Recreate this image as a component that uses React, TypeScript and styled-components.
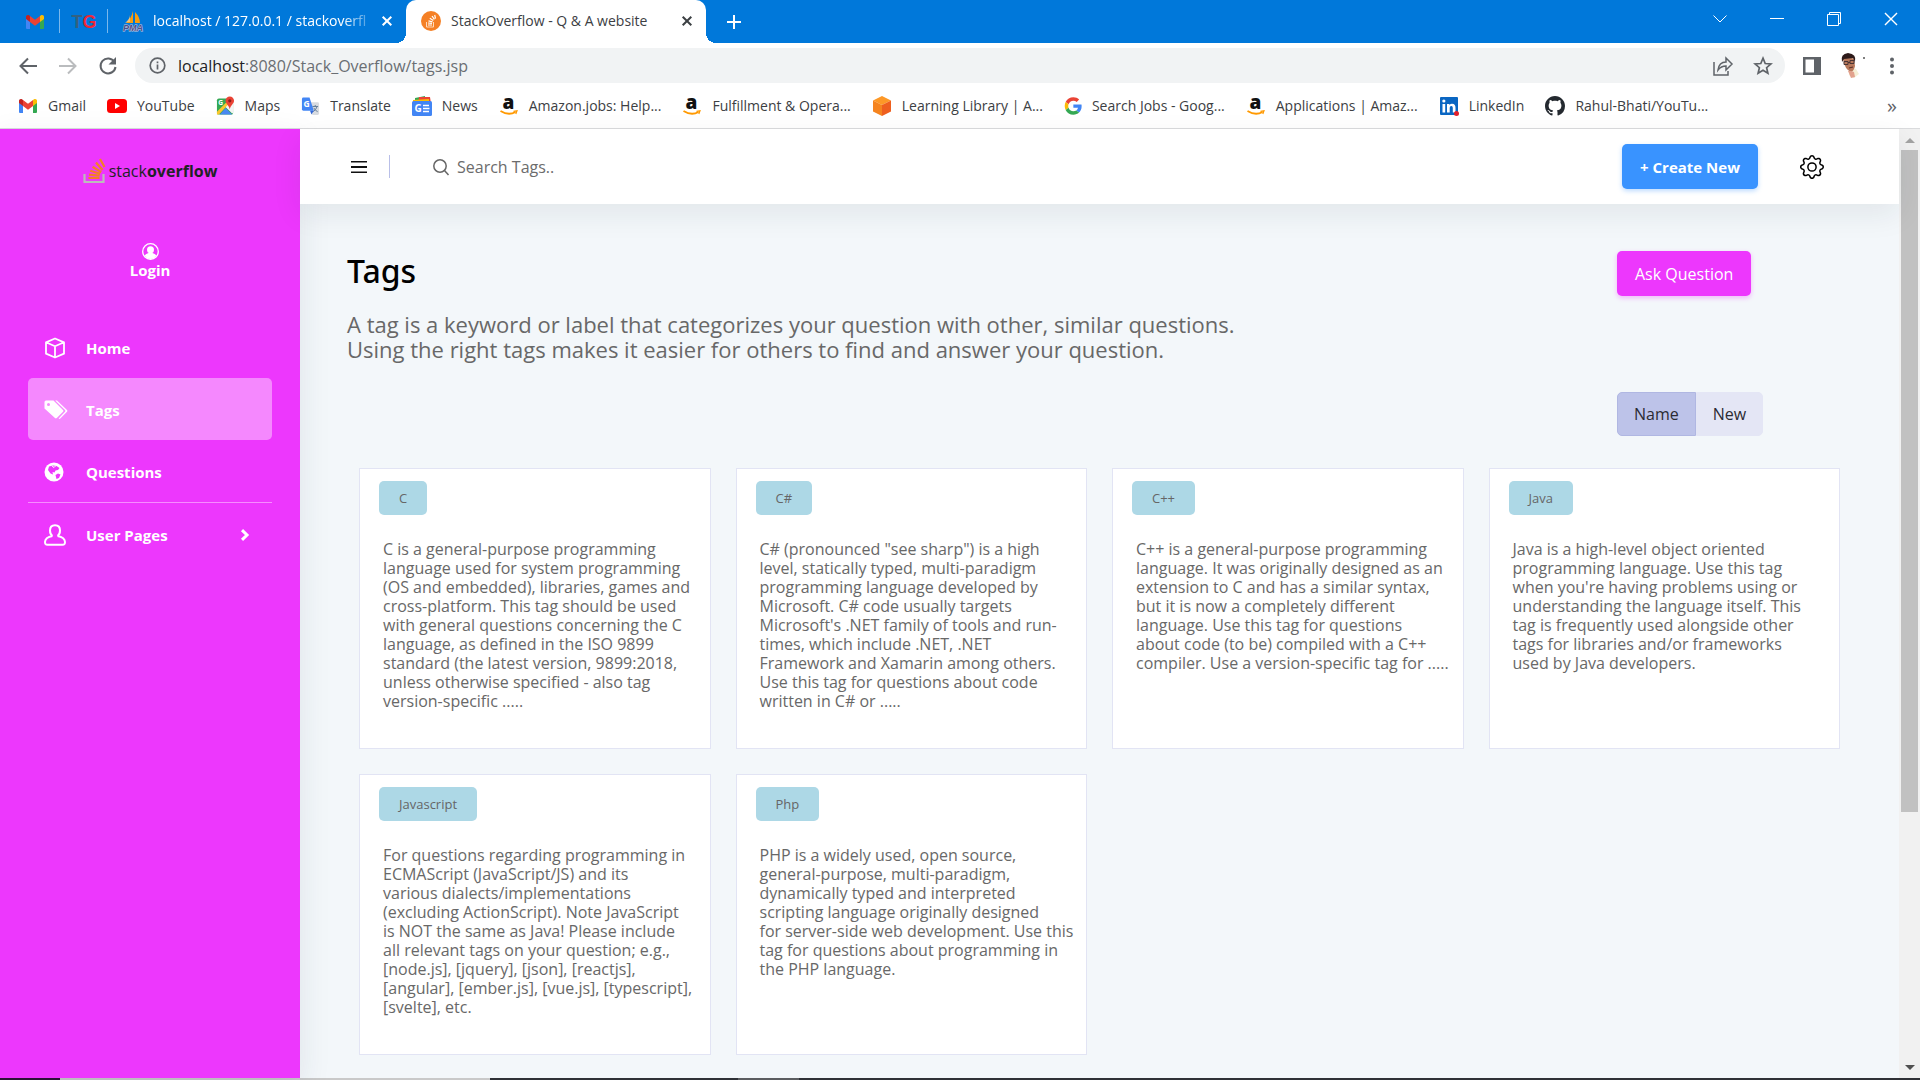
import React from "react";
import styled, { createGlobalStyle, css } from "styled-components";

const uiFont = '"Open Sans", "Noto Sans", sans-serif';
const pink = "#ed37fd";

const GlobalStyle = createGlobalStyle`
  *, *::before, *::after { box-sizing: border-box; }
  body { margin: 0; overflow: hidden; background: #fff; font-family: ${uiFont}; }
  button, input { font-family: inherit; }
  svg { display: block; flex: none; overflow: visible; }
`;

/* ---------- Browser window ---------- */

const Window = styled.div`
  display: flex;
  flex-direction: column;
  height: 100vh;
`;

const TabStrip = styled.header`
  display: flex;
  align-items: stretch;
  height: 43px;
  flex: none;
  background: #0078da;
`;

const plainButton = css`
  display: flex;
  align-items: center;
  justify-content: center;
  padding: 0;
  border: 0;
  background: none;
  cursor: pointer;
`;

const PinnedTab = styled.button<{ $wide?: boolean }>`
  ${plainButton}
  width: ${(p) => (p.$wide ? 60 : 48)}px;
  padding-left: ${(p) => (p.$wide ? 10 : 0)}px;
  background: linear-gradient(#7ab8ec, #7ab8ec) right 9px / 1px 24px no-repeat;
`;

const TgMark = styled.span`
  font: 700 18px/24px "Liberation Sans", Arial, sans-serif;
  color: #35617f;
  b { color: #ee2737; }
`;

const Tab = styled.div<{ $active?: boolean }>`
  position: relative;
  display: flex;
  align-items: center;
  width: 298px;
  padding: 0 9px 2px 15px;
  font-size: 14px;
  color: ${(p) => (p.$active ? "#3c4043" : "#fff")};
  ${(p) =>
    p.$active &&
    css`
      width: 300px;
      background: #fff;
      border-radius: 10px 10px 0 0;
      &::before,
      &::after {
        content: "";
        position: absolute;
        bottom: 0;
        width: 10px;
        height: 10px;
      }
      &::before { right: 100%; background: radial-gradient(circle at 0 0, transparent 10px, #fff 10px); }
      &::after { left: 100%; background: radial-gradient(circle at 100% 0, transparent 10px, #fff 10px); }
    `}
`;

const TabTitle = styled.span<{ $fade?: boolean }>`
  flex: 1;
  min-width: 0;
  margin: 0 4px 0 10px;
  white-space: nowrap;
  ${(p) => p.$fade && "mask-image: linear-gradient(90deg, #000 86%, transparent 102%);"}
`;

const IconButton = styled.button<{ $w?: number }>`
  ${plainButton}
  flex: none;
  width: ${(p) => p.$w ?? 20}px;
  color: inherit;
`;

const NewTab = styled(IconButton)`
  margin-left: 10px;
  color: #fff;
`;

const WindowControls = styled.div`
  display: flex;
  margin-left: auto;
  padding-bottom: 6px;
  color: #fff;
`;

const Toolbar = styled.div`
  display: flex;
  align-items: center;
  height: 45px;
  flex: none;
  padding: 0 13px 0 8px;
  color: #5f6368;
`;

const Address = styled.div`
  display: flex;
  align-items: center;
  flex: 1;
  height: 35px;
  margin: 0 8px 0 7px;
  padding: 0 8px 0 14px;
  gap: 12px;
  border-radius: 18px;
  background: #f1f3f4;
`;

const Url = styled.a`
  flex: 1;
  font-size: 16px;
  line-height: 24px;
  color: #6a6e73;
  text-decoration: none;
  strong { font-weight: 400; color: #202124; }
`;

const Bookmarks = styled.nav`
  display: flex;
  align-items: center;
  gap: 21px;
  height: 41px;
  flex: none;
  padding: 0 18px 4px 18px;
  border-bottom: 1px solid #dadbdd;
`;

const Bookmark = styled.a`
  display: flex;
  align-items: center;
  gap: 10px;
  font-size: 14px;
  line-height: 20px;
  white-space: nowrap;
  color: #3c4043;
  text-decoration: none;
`;

const More = styled(IconButton)`
  margin-left: auto;
  font-size: 20px;
  line-height: 20px;
  color: #5f6368;
`;

const Viewport = styled.div`
  display: flex;
  flex: 1;
  min-height: 0;
`;

const Scrollbar = styled.div`
  display: flex;
  flex-direction: column;
  align-items: center;
  width: 21px;
  flex: none;
  padding: 9px 1px 8px;
  background: #f1f1f1;
`;

const Thumb = styled.div`
  flex: 0 0 71%;
  width: 17px;
  margin: 7px 0 auto;
  background: #c1c1c1;
`;

const Taskbar = styled.footer`
  display: grid;
  grid-template-columns: 60px 430px 248px 61px 1fr;
  height: 2px;
  flex: none;
  background: #2f3136;
`;

const TaskbarPart = styled.span<{ $color: string }>`
  background: ${(p) => p.$color};
`;

/* ---------- Site ---------- */

const Sidebar = styled.aside`
  display: flex;
  flex-direction: column;
  width: 300px;
  flex: none;
  padding: 28px 28px 0;
  z-index: 1;
  background: ${pink};
  color: #fff;
  box-shadow: 0 10px 30px rgba(30, 45, 70, 0.1);
`;

const Brand = styled.a`
  display: flex;
  align-items: center;
  align-self: center;
  gap: 3px;
  height: 28px;
  font-size: 16px;
  line-height: 20px;
  color: #222226;
  text-decoration: none;
`;

const BrandName = styled.span`
  font-weight: 400;
  b { font-weight: 700; }
`;

const Login = styled.a`
  display: flex;
  flex-direction: column;
  align-items: center;
  margin: 58px 0 36px;
  font-size: 15px;
  font-weight: 700;
  line-height: 20px;
  color: #fff;
  text-decoration: none;
`;

const Menu = styled.ul`
  margin: 0;
  padding: 0;
  list-style: none;
`;

const MenuItem = styled.li<{ $divided?: boolean }>`
  ${(p) => p.$divided && "border-bottom: 1px solid #f78bff;"}
`;

const MenuLink = styled.a<{ $active?: boolean }>`
  display: grid;
  grid-template-columns: 42px 1fr 14px;
  align-items: center;
  height: 62px;
  padding: 2px 18px 0 16px;
  border-radius: 5px;
  background: ${(p) => (p.$active ? "#f588fe" : "transparent")};
  font-size: 15px;
  font-weight: 700;
  line-height: 22px;
  color: #fff;
  text-decoration: none;
`;

const Site = styled.div`
  display: flex;
  flex-direction: column;
  flex: 1;
  min-width: 0;
  background: #f3f7fa;
`;

const Navbar = styled.div`
  display: flex;
  align-items: center;
  height: 75px;
  flex: none;
  padding: 0 75px 0 49px;
  z-index: 2;
  background: #fff;
  box-shadow: 0 10px 30px rgba(30, 35, 50, 0.08);
`;

const NavDivider = styled.span`
  width: 1px;
  height: 23px;
  margin: 0 42px 0 20px;
  background: #b9bfe8;
`;

const Search = styled.label`
  display: flex;
  align-items: center;
  flex: 1;
  gap: 7px;
  color: #666;
`;

const SearchInput = styled.input`
  flex: 1;
  padding: 0;
  border: 0;
  outline: 0;
  background: none;
  font-size: 16px;
  line-height: 24px;
  color: #666;
  &::placeholder { color: #6c6c6c; opacity: 1; }
`;

const Button = styled.button<{ $color: string; $bold?: boolean }>`
  height: 45px;
  padding: 0 18px;
  border: 0;
  border-radius: 5px;
  background: ${(p) => p.$color};
  box-shadow: 0 2px 5px ${(p) => p.$color}55;
  font-size: ${(p) => (p.$bold ? 15 : 16)}px;
  font-weight: ${(p) => (p.$bold ? 700 : 500)};
  line-height: 22px;
  color: #fff;
  cursor: pointer;
`;

const SettingsButton = styled(IconButton)`
  margin-left: 42px;
  color: #000;
`;

const Main = styled.main`
  flex: 1;
  min-height: 0;
  overflow: hidden;
  padding: 47px 47px 0;
`;

const HeadRow = styled.div`
  display: grid;
  grid-template-columns: 1fr 235px;
  justify-items: start;
  align-items: start;
`;

const Title = styled.h1`
  margin: 0;
  font: 500 32px/40px "Noto Sans", sans-serif;
  color: #000;
`;

const Lead = styled.p`
  max-width: 940px;
  margin: 16px 0 30px;
  font-size: 22px;
  line-height: 25px;
  color: #686868;
`;

const Sort = styled.div`
  display: flex;
  grid-column: 2;
  height: 44px;
`;

const SortButton = styled.button<{ $active?: boolean }>`
  padding: 0 16px;
  border: 1px solid ${(p) => (p.$active ? "#b0b7e2" : "#e4e6f5")};
  border-radius: ${(p) => (p.$active ? "5px 0 0 5px" : "0 5px 5px 0")};
  background: ${(p) => (p.$active ? "#bdc3e9" : "#e4e6f5")};
  font-size: 16px;
  line-height: 22px;
  color: #2b2b33;
  cursor: pointer;
`;

const CardGrid = styled.section`
  display: grid;
  grid-template-columns: repeat(4, 1fr);
  gap: 25px;
  margin-top: 32px;
  padding: 0 12px;
`;

const Card = styled.article`
  min-height: 281px;
  padding: 12px 8px 24px 19px;
  border: 1px solid #e2e4f4;
  background: #fff;
`;

const Chip = styled.a`
  display: inline-block;
  padding: 0 20px;
  border-radius: 5px;
  background: #add8e6;
  font-size: 13px;
  line-height: 34px;
  vertical-align: top;
  color: #666;
  text-decoration: none;
`;

const Description = styled.p`
  margin: 25px 0 0 4px;
  font-size: 16px;
  line-height: 19px;
  white-space: pre-line;
  color: #686868;
`;

/* ---------- Icons ---------- */

const GmailIcon = () => (
  <svg width="20" height="20" viewBox="0 0 20 20">
    <path d="M1 4.5V16a1 1 0 0 0 1 1h3V8z" fill="#4285f4" />
    <path d="M19 4.5V16a1 1 0 0 1-1 1h-3V8z" fill="#34a853" />
    <path d="M15 8V4l1-.7c1.300-.9 3-.1 3 1.500V7l-4 3z" fill="#fbbc04" />
    <path d="M5 8V4l-1-.7C2.700 2.400 1 3.200 1 4.800V7l4 3z" fill="#c5221f" />
    <path d="M5 4l5 3.800L15 4v6l-5 3.800L5 10z" fill="#ea4335" />
  </svg>
);

const PmaIcon = () => (
  <svg width="20" height="20" viewBox="0 0 20 20">
    <path d="M10 0v12H3Q8 8 10 0zM12 1q5 5 5 11h-5z" fill="#f89c0e" />
    <path d="M7 4q0 4-5 8 2-1 5-1z" fill="#f4c172" />
    <text x="10" y="20" textAnchor="middle" fontSize="9" fontWeight="700" fontStyle="italic" fontFamily="Liberation Sans" fill="#4d4f89" stroke="#c8cbdf" strokeWidth="1" paintOrder="stroke">PMA</text>
  </svg>
);

const StackLines = ({ color }: { color: string }) => (
  <g stroke={color} strokeWidth="2.200" fill="none">
    <path d="M5.500 20h11M6 16.600l10.600 1.100M7.200 12.800l10 3M9.600 8.800l8.600 5.300M13 4.500l6.500 7.500M17 1l4.500 8" />
  </g>
);

const StackFavicon = () => (
  <svg width="20" height="20" viewBox="0 0 20 20">
    <circle cx="10" cy="10" r="10" fill="#f58025" />
    <path d="M5.500 11v5h7v-5" fill="none" stroke="#ffd9bb" />
    <path d="M7 14h4M7 12l4 .4M7.500 9.800l4 1.100M8.800 7.300l3.500 2.100M11 5l2.400 3.300M13.700 4l.8 3.600" stroke="#fff" strokeWidth="1.200" />
  </svg>
);

const StackLogo = () => (
  <svg width="23" height="26" viewBox="0 0 23 26">
    <path d="M1.500 16v8h19v-8" fill="none" stroke="#bcbbbb" strokeWidth="2.200" />
    <StackLines color="#f48024" />
  </svg>
);

const CloseIcon = ({ size = 10, w = 2 }) => (
  <svg width={size} height={size} viewBox="0 0 10 10" stroke="currentColor" strokeWidth={w}>
    <path d="M.7.7l8.600 8.600M9.300.7L.7 9.300" />
  </svg>
);

const AmazonIcon = () => (
  <svg width="20" height="20" viewBox="0 0 20 20">
    <text x="9.500" y="13" textAnchor="middle" fontSize="19" fontWeight="800" fontFamily="Open Sans" fill="#111">a</text>
    <path d="M1.500 15q8 5 15 1" fill="none" stroke="#f90" strokeWidth="1.800" />
    <path d="M14.500 15.300l3.500-.5-1.200 3.200" fill="none" stroke="#f90" strokeWidth="1.200" />
  </svg>
);

const YoutubeIcon = () => (
  <svg width="20" height="20" viewBox="0 0 20 20">
    <rect y="3" width="20" height="14" rx="3.500" fill="#f00" />
    <path d="M8 7v6l5-3z" fill="#fff" />
  </svg>
);

const MapsIcon = () => (
  <svg width="19" height="20" viewBox="0 0 20 20">
    <rect x="1" y="2" width="17" height="17" rx="2" fill="#34a853" />
    <path d="M1 17L16 2l2 3v12l-1 1L10 11 2 19z" fill="#f4f4f4" />
    <path d="M4 19l6-7 7 7z" fill="#4a89f3" />
    <path d="M1 16L12 5l2 2L3 19H1z" fill="#fbc72c" />
    <text x="5" y="9" textAnchor="middle" fontSize="7" fontWeight="700" fontFamily="Open Sans" fill="#fff">G</text>
    <path d="M14.500 0a4.500 4.500 0 0 1 4.500 4.500c0 3-3.500 4.500-4.500 9-1-4.500-4.500-6-4.500-9A4.500 4.500 0 0 1 14.500 0z" fill="#ea4335" />
    <circle cx="14.500" cy="4.500" r="1.700" fill="#8c1d18" />
  </svg>
);

const TranslateIcon = () => (
  <svg width="19" height="20" viewBox="0 0 20 20">
    <path d="M8 6h9.500q1.500 0 1.500 1.500V18q0 1.500-1.500 1.500H12z" fill="#d8dbe0" />
    <path d="M12 10.500h6M15 9v1.500M17 10.500q-1 3-4 5.500M13.500 12q1 2.500 4 4" stroke="#5f7a96" fill="none" />
    <path d="M2.500 1H9l4.500 14h-11Q1 15 1 13.500v-11Q1 1 2.500 1z" fill="#4386f5" />
    <path d="M9.500 15h4L11 19z" fill="#3367d6" />
    <text x="6" y="11" textAnchor="middle" fontSize="9" fontWeight="700" fontFamily="Open Sans" fill="#fff">G</text>
  </svg>
);

const NewsIcon = () => (
  <svg width="20" height="20" viewBox="0 0 20 20">
    <path d="M3 2l10-2v8H3z" fill="#34a853" />
    <path d="M7 1h11l1 7H6z" fill="#ea4335" />
    <path d="M1 4l16-1v6H1z" fill="#fbbc04" />
    <rect y="5" width="20" height="15" rx="1.500" fill="#4285f4" />
    <text x="6" y="16" textAnchor="middle" fontSize="10" fontWeight="700" fontFamily="Open Sans" fill="#fff">G</text>
    <path d="M11 9.500h6M11 12.500h6.500M11 15.500h6" stroke="#fff" strokeWidth="1.500" />
  </svg>
);

const CubeIcon = () => (
  <svg width="20" height="20" viewBox="0 0 20 20">
    <path d="M10 0l9 4.500L10 9 1 4.500z" fill="#fd9827" />
    <path d="M1 4.500L10 9v11l-9-4.500z" fill="#f5841f" />
    <path d="M19 4.500L10 9v11l9-4.500z" fill="#ee5f1f" />
  </svg>
);

const GoogleIcon = () => (
  <svg width="18" height="18" viewBox="-2 -1 50 50">
    <path fill="#ea4335" d="M24 9.500c3.540 0 6.710 1.220 9.210 3.600l6.850-6.850C35.900 2.380 30.470 0 24 0 14.620 0 6.510 5.380 2.560 13.220l7.980 6.190C12.430 13.720 17.740 9.500 24 9.500z" />
    <path fill="#4285f4" d="M46.980 24.550c0-1.570-.15-3.090-.38-4.550H24v9.020h12.940c-.58 2.960-2.260 5.480-4.780 7.180l7.730 6c4.510-4.180 7.090-10.360 7.090-17.650z" />
    <path fill="#fbbc05" d="M10.530 28.590c-.48-1.450-.76-2.990-.76-4.590s.27-3.140.76-4.590l-7.980-6.190C.92 16.460 0 20.120 0 24s.92 7.540 2.560 10.780z" />
    <path fill="#34a853" d="M24 48c6.480 0 11.930-2.130 15.890-5.810l-7.730-6c-2.150 1.450-4.920 2.300-8.160 2.300-6.260 0-11.570-4.220-13.470-9.910l-7.980 6.190C6.510 42.620 14.620 48 24 48z" />
  </svg>
);

const LinkedInIcon = () => (
  <svg width="20" height="20" viewBox="0 0 20 20">
    <rect x="1" y="1" width="18" height="18" rx="1" fill="#0a66c2" />
    <path d="M3.500 8h2.700v8.500H3.500zM8 8h2.500v1.200Q11.300 7.800 13 7.800c2.800 0 3.500 1.800 3.500 4.200v4.500h-2.700v-4c0-1.300-.2-2.400-1.500-2.400s-1.600 1-1.600 2.300v4.100H8z" fill="#fff" />
    <circle cx="4.850" cy="5" r="1.600" fill="#fff" />
    <circle cx="17.500" cy="17.500" r="2.500" fill="#e0202b" />
  </svg>
);

const GithubIcon = () => (
  <svg width="20" height="20" viewBox="0 0 16 16" fill="#24292f">
    <path d="M8 0C3.580 0 0 3.580 0 8c0 3.540 2.290 6.530 5.470 7.590.4.070.55-.17.55-.38 0-.19-.01-.82-.01-1.490-2.010.37-2.530-.49-2.690-.94-.09-.23-.48-.94-.82-1.130-.28-.15-.68-.52-.01-.53.63-.01 1.080.58 1.230.82.72 1.210 1.870.87 2.330.66.070-.52.280-.87.510-1.070-1.780-.2-3.640-.89-3.640-3.950 0-.87.310-1.590.820-2.150-.08-.2-.36-1.020.08-2.120 0 0 .67-.21 2.200.82.640-.18 1.320-.27 2-.27s1.360.09 2 .27c1.530-1.040 2.200-.82 2.200-.82.44 1.100.16 1.920.08 2.120.51.56.82 1.270.82 2.150 0 3.070-1.870 3.750-3.650 3.950.29.25.54.73.54 1.480 0 1.070-.01 1.930-.01 2.200 0 .21.15.46.55.38A8.010 8.010 0 0 0 16 8c0-4.420-3.580-8-8-8z" />
  </svg>
);

const line = { fill: "none", stroke: "currentColor", strokeWidth: 2 } as const;

const ArrowIcon = ({ forward }: { forward?: boolean }) => (
  <svg width="18" height="18" viewBox="0 0 18 18" {...line}>
    <path d={forward ? "M0 9h16M9 1.500L16.500 9 9 16.500" : "M18 9H2M9 1.500L1.500 9 9 16.500"} />
  </svg>
);

const ReloadIcon = () => (
  <svg width="20" height="20" viewBox="0 0 20 20" {...line}>
    <path d="M16.500 6A7.500 7.500 0 1 0 17.500 11" />
    <path d="M18 1v7.500h-7.500z" fill="currentColor" stroke="none" />
  </svg>
);

const InfoIcon = () => (
  <svg width="17" height="17" viewBox="0 0 17 17" {...line} strokeWidth={1.7}>
    <circle cx="8.500" cy="8.500" r="7.300" />
    <path d="M8.500 7.500v5M8.500 4.500v1.700" />
  </svg>
);

const ShareIcon = () => (
  <svg width="20" height="20" viewBox="0 0 20 20" {...line} strokeWidth={1.5}>
    <path d="M1 6v13h14v-4M5 14q1-8 8-8V2l6 6-6 6v-4q-5 0-8 4z" />
  </svg>
);

const StarIcon = () => (
  <svg width="20" height="20" viewBox="0 0 20 20" {...line} strokeWidth={1.700}>
    <path d="M10 2.200l2.200 5.300 5.700.5-4.300 3.700 1.300 5.600-4.900-3-4.900 3 1.300-5.600L2.100 8l5.700-.5z" />
  </svg>
);

const PanelIcon = () => (
  <svg width="18" height="18" viewBox="0 0 18 18">
    <path fillRule="evenodd" d="M0 0h18v18H0zM2.500 2.500v13H11v-13z" fill="#5f6368" />
  </svg>
);

const Avatar = () => (
  <svg width="30" height="26" viewBox="0 0 30 26">
    <path d="M12 15l5 1 3 5-5 4-5-3z" fill="#f5efd6" />
    <path d="M4 6q5-4 11 0l1 7q-1 5-4 6Q6 17 4 6z" fill="#b8795c" />
    <path d="M3 9Q1 1 9 0q9 1 7 9l-2-4-9 1z" fill="#2d1a1a" />
    <path d="M5 8.500h4v3H5zM11 7.500h4v3h-4zM9 9.500h2" fill="none" stroke="#4a3434" />
    <path d="M10 15l4-1" stroke="#5b2f28" strokeWidth="1.200" />
    <path d="M9 18l3 7 4-1-1-5-3-1z" fill="#e2a28d" />
    <circle cx="25" cy="5" r="1" fill="#555" />
  </svg>
);

const DotsIcon = () => (
  <svg width="20" height="20" viewBox="0 0 20 20" fill="currentColor">
    <circle cx="10" cy="3.500" r="2" /><circle cx="10" cy="10" r="2" /><circle cx="10" cy="16.500" r="2" />
  </svg>
);

const PersonCircleIcon = () => (
  <svg width="17" height="17" viewBox="0 0 17 17" fill="#fff">
    <circle cx="8.500" cy="8.500" r="7.800" fill="none" stroke="#fff" strokeWidth="1.300" />
    <circle cx="8.500" cy="6.800" r="3.500" />
    <path d="M2.500 12.500q1.500-2 4-2.500h4q2.500.5 4 2.500-2.500 3.500-6 3.500t-6-3.500z" />
  </svg>
);

const BoxIcon = () => (
  <svg width="22" height="22" viewBox="0 0 22 22" fill="none" stroke="#fff" strokeWidth="1.800" strokeLinejoin="round">
    <path d="M11 1.500l9 3.800v11.400l-9 3.800-9-3.800V5.300zM2 5.300l9 4 9-4M11 9.300v11.200" />
  </svg>
);

const TagsIcon = () => (
  <svg width="24" height="20" viewBox="0 0 24 20" fill="#fff">
    <path fillRule="evenodd" d="M2 .5h7.500L19 10q.9.900 0 1.800L12.800 18q-.9.900-1.800 0L.500 8.500V2Q.5.500 2 .5zM4.500 3a1.500 1.500 0 1 0 0 3 1.500 1.500 0 0 0 0-3z" />
    <path d="M11.200.5H13L23 10q.9.900 0 1.800L16.300 18.500q-.8.800-1.700.1l6.400-6.800q.9-.9 0-1.800z" />
  </svg>
);

const GlobeIcon = () => (
  <svg width="20" height="20" viewBox="0 0 20 20">
    <circle cx="10" cy="10" r="9.500" fill="#fff" />
    <path d="M5 4.500l4-1 3.500.5 3 2-1.500 2-2.500.5-1 2-2-.5.500 2.500-2.500-1L4 8zM11.500 13l2.500-1.500 2.500 1-1.500 3.500-2.500 1z" fill={pink} />
    <path d="M8 4l2 1.500 1.500-1.500" stroke="#fff" fill="none" />
  </svg>
);

const UserIcon = () => (
  <svg width="22" height="22" viewBox="0 0 22 22" fill="none" stroke="#fff" strokeWidth="2">
    <path d="M8.500 12q-2.500-1.500-2.500-5.500 0-5.300 5-5.300t5 5.300q0 4-2.500 5.500M8.500 12q-7.300 1.300-7.500 6-.1 2.800 2.500 2.800h15q2.600 0 2.500-2.800-.2-4.700-7.500-6" />
  </svg>
);

const ChevronIcon = () => (
  <svg width="10" height="12" viewBox="0 0 10 12" fill="none" stroke="#fff" strokeWidth="3">
    <path d="M2 1.200L7 6l-5 4.800" />
  </svg>
);

const MenuIcon = () => (
  <svg width="20" height="14" viewBox="0 0 20 14" fill="#111">
    <path d="M2 1h16v1.500H2zM2 6h16v2H2zM2 11.500h16V13H2z" />
  </svg>
);

const SearchIcon = () => (
  <svg width="18" height="18" viewBox="0 0 18 18" fill="none" stroke="currentColor" strokeWidth="1.500">
    <circle cx="8" cy="8" r="6.200" /><path d="M12.500 12.500l4 4.500" />
  </svg>
);

const GearIcon = () => (
  <svg width="24" height="24" viewBox="0 0 16 16" fill="currentColor">
    <path d="M8 4.754a3.246 3.246 0 1 0 0 6.492 3.246 3.246 0 0 0 0-6.492M5.754 8a2.246 2.246 0 1 1 4.492 0 2.246 2.246 0 0 1-4.492 0" />
    <path d="M9.796 1.343c-.527-1.790-3.065-1.790-3.592 0l-.094.319a.873.873 0 0 1-1.255.520l-.292-.160c-1.640-.892-3.433.902-2.540 2.541l.159.292a.873.873 0 0 1-.520 1.255l-.319.094c-1.790.527-1.790 3.065 0 3.592l.319.094a.873.873 0 0 1 .520 1.255l-.160.292c-.892 1.640.901 3.434 2.541 2.540l.292-.159a.873.873 0 0 1 1.255.520l.094.319c.527 1.790 3.065 1.790 3.592 0l.094-.319a.873.873 0 0 1 1.255-.520l.292.160c1.640.893 3.434-.902 2.540-2.541l-.159-.292a.873.873 0 0 1 .520-1.255l.319-.094c1.790-.527 1.790-3.065 0-3.592l-.319-.094a.873.873 0 0 1-.520-1.255l.160-.292c.893-1.640-.902-3.433-2.541-2.540l-.292.159a.873.873 0 0 1-1.255-.520zm-2.633.283c.246-.835 1.428-.835 1.674 0l.094.319a1.873 1.873 0 0 0 2.693 1.115l.291-.160c.764-.415 1.600.420 1.184 1.185l-.159.292a1.873 1.873 0 0 0 1.116 2.692l.318.094c.835.246.835 1.428 0 1.674l-.319.094a1.873 1.873 0 0 0-1.115 2.693l.160.291c.415.764-.420 1.600-1.185 1.184l-.291-.159a1.873 1.873 0 0 0-2.693 1.116l-.094.318c-.246.835-1.428.835-1.674 0l-.094-.319a1.873 1.873 0 0 0-2.692-1.115l-.292.160c-.764.415-1.600-.420-1.184-1.185l.159-.291A1.873 1.873 0 0 0 1.945 8.930l-.319-.094c-.835-.246-.835-1.428 0-1.674l.319-.094A1.873 1.873 0 0 0 3.060 4.377l-.160-.292c-.415-.764.420-1.600 1.185-1.184l.292.159a1.873 1.873 0 0 0 2.692-1.115z" />
  </svg>
);

const ScrollArrow = ({ down }: { down?: boolean }) => (
  <svg width="10" height="5" viewBox="0 0 10 5">
    <path d={down ? "M0 0h10L5 5z" : "M0 5h10L5 0z"} fill={down ? "#505050" : "#a3a3a3"} />
  </svg>
);

/* ---------- Content ---------- */

const bookmarks: [string, React.FC][] = [
  ["Gmail", GmailIcon],
  ["YouTube", YoutubeIcon],
  ["Maps", MapsIcon],
  ["Translate", TranslateIcon],
  ["News", NewsIcon],
  ["Amazon.jobs: Help...", AmazonIcon],
  ["Fulfillment & Opera...", AmazonIcon],
  ["Learning Library | A...", CubeIcon],
  ["Search Jobs - Goog...", GoogleIcon],
  ["Applications | Amaz...", AmazonIcon],
  ["LinkedIn", LinkedInIcon],
  ["Rahul-Bhati/YouTu...", GithubIcon],
];

const menu: { label: string; Icon: React.FC; active?: boolean; divided?: boolean; more?: boolean }[] = [
  { label: "Home", Icon: BoxIcon },
  { label: "Tags", Icon: TagsIcon, active: true },
  { label: "Questions", Icon: GlobeIcon, divided: true },
  { label: "User Pages", Icon: UserIcon, more: true },
];

const tags = [
  { name: "C", text: "C is a general-purpose programming language used for system programming (OS and embedded), libraries, games and cross-platform. This tag should be used with general questions concerning the C language, as defined in the ISO 9899 standard (the latest version, 9899:2018, unless otherwise specified - also tag version-specific ....." },
  { name: "C#", text: "C# (pronounced \"see sharp\") is a high level, statically typed, multi-paradigm programming language developed by Microsoft. C# code usually targets Microsoft's .NET family of tools and run-times, which include .NET, .NET Framework and Xamarin among others. Use this tag for questions about code written in C# or ....." },
  { name: "C++", text: "C++ is a general-purpose programming language. It was originally designed as an extension to C and has a similar syntax, but it is now a completely different language. Use this tag for questions\nabout code (to be) compiled with a C++ compiler. Use a version-specific tag for ....." },
  { name: "Java", text: "Java is a high-level object oriented programming language. Use this tag\nwhen you're having problems using or understanding the language itself. This\ntag is frequently used alongside other\ntags for libraries and/or frameworks\nused by Java developers." },
  { name: "Javascript", text: "For questions regarding programming in\nECMAScript (JavaScript/JS) and its\nvarious dialects/implementations\n(excluding ActionScript). Note JavaScript\nis NOT the same as Java! Please include\nall relevant tags on your question; e.g.,\n[node.js], [jquery], [json], [reactjs],\n[angular], [ember.js], [vue.js], [typescript],\n[svelte], etc." },
  { name: "Php", text: "PHP is a widely used, open source,\ngeneral-purpose, multi-paradigm,\ndynamically typed and interpreted\nscripting language originally designed\nfor server-side web development. Use this\ntag for questions about programming in\nthe PHP language." },
];

export default function App() {
  return (
    <Window>
      <GlobalStyle />
      <TabStrip>
        <PinnedTab $wide aria-label="Gmail"><GmailIcon /></PinnedTab>
        <PinnedTab><TgMark>T<b>G</b></TgMark></PinnedTab>
        <Tab>
          <PmaIcon />
          <TabTitle $fade>localhost / 127.0.0.1 / stackoverfl</TabTitle>
          <IconButton aria-label="Close tab"><CloseIcon /></IconButton>
        </Tab>
        <Tab $active>
          <StackFavicon />
          <TabTitle>StackOverflow - Q &amp; A website</TabTitle>
          <IconButton aria-label="Close tab"><CloseIcon /></IconButton>
        </Tab>
        <NewTab $w={36} aria-label="New tab">
          <svg width="16" height="16" viewBox="0 0 16 16" {...line}><path d="M8 1v14M1 8h14" /></svg>
        </NewTab>
        <WindowControls>
          <IconButton $w={57} aria-label="Search tabs">
            <svg width="14" height="8" viewBox="0 0 14 8" {...line} strokeWidth={1}><path d="M.5.5L7 7 13.500.5" /></svg>
          </IconButton>
          <IconButton $w={57} aria-label="Minimize">
            <svg width="14" height="2" viewBox="0 0 14 2"><path d="M0 0h14v1H0z" fill="#fff" /></svg>
          </IconButton>
          <IconButton $w={57} aria-label="Restore">
            <svg width="14" height="14" viewBox="0 0 14 14" {...line} strokeWidth={1}><path d="M.5 2.500h11v11H.5zM2.500 2.500v-2h11v11h-2" /></svg>
          </IconButton>
          <IconButton $w={58} aria-label="Close"><CloseIcon size={14} w={1} /></IconButton>
        </WindowControls>
      </TabStrip>

      <Toolbar>
        <IconButton $w={39} aria-label="Back"><ArrowIcon /></IconButton>
        <IconButton $w={41} aria-label="Forward" disabled><svg width="18" height="18" viewBox="0 0 18 18" fill="none" stroke="#babcbe" strokeWidth="2"><path d="M0 9h16M9 1.500L16.500 9 9 16.500" /></svg></IconButton>
        <IconButton $w={40} aria-label="Reload"><ReloadIcon /></IconButton>
        <Address>
          <InfoIcon />
          <Url href="#"><strong>localhost</strong>:8080/Stack_Overflow/tags.jsp</Url>
          <IconButton $w={28} aria-label="Share"><ShareIcon /></IconButton>
          <IconButton $w={28} aria-label="Bookmark"><StarIcon /></IconButton>
        </Address>
        <IconButton $w={38} aria-label="Side panel"><PanelIcon /></IconButton>
        <IconButton $w={46} aria-label="Profile"><Avatar /></IconButton>
        <IconButton $w={30} aria-label="Browser menu"><DotsIcon /></IconButton>
      </Toolbar>

      <Bookmarks aria-label="Bookmarks">
        {bookmarks.map(([label, Icon]) => (
          <Bookmark href="#" key={label}><Icon />{label}</Bookmark>
        ))}
        <More aria-label="More bookmarks">»</More>
      </Bookmarks>

      <Viewport>
        <Sidebar>
          <Brand href="#"><StackLogo /><BrandName>stack<b>overflow</b></BrandName></Brand>
          <Login href="#"><PersonCircleIcon />Login</Login>
          <Menu>
            {menu.map(({ label, Icon, active, divided, more }) => (
              <MenuItem key={label} $divided={divided}>
                <MenuLink href="#" $active={active}>
                  <Icon />{label}{more && <ChevronIcon />}
                </MenuLink>
              </MenuItem>
            ))}
          </Menu>
        </Sidebar>
        <Site>
          <Navbar>
            <IconButton aria-label="Toggle menu"><MenuIcon /></IconButton>
            <NavDivider />
            <Search>
              <SearchIcon />
              <SearchInput type="text" placeholder="Search Tags.." aria-label="Search tags" />
            </Search>
            <Button $color="#3993ff" $bold>+ Create New</Button>
            <SettingsButton $w={24} aria-label="Settings"><GearIcon /></SettingsButton>
          </Navbar>
          <Main>
            <HeadRow>
              <Title>Tags</Title>
              <Button $color={pink}>Ask Question</Button>
            </HeadRow>
            <Lead>
              A tag is a keyword or label that categorizes your question with other, similar questions.
              Using the right tags makes it easier for others to find and answer your question.
            </Lead>
            <HeadRow>
              <Sort>
                <SortButton $active>Name</SortButton>
                <SortButton>New</SortButton>
              </Sort>
            </HeadRow>
            <CardGrid>
              {tags.map((tag) => (
                <Card key={tag.name}>
                  <Chip href="#">{tag.name}</Chip>
                  <Description>{tag.text}</Description>
                </Card>
              ))}
            </CardGrid>
          </Main>
        </Site>
        <Scrollbar aria-hidden="true">
          <ScrollArrow />
          <Thumb />
          <ScrollArrow down />
        </Scrollbar>
      </Viewport>
      <Taskbar>
        <TaskbarPart $color="#2d1236" />
        <TaskbarPart $color="#c9c9c9" />
        <TaskbarPart $color="#2f3136" />
        <TaskbarPart $color="#5b5d60" />
      </Taskbar>
    </Window>
  );
}
